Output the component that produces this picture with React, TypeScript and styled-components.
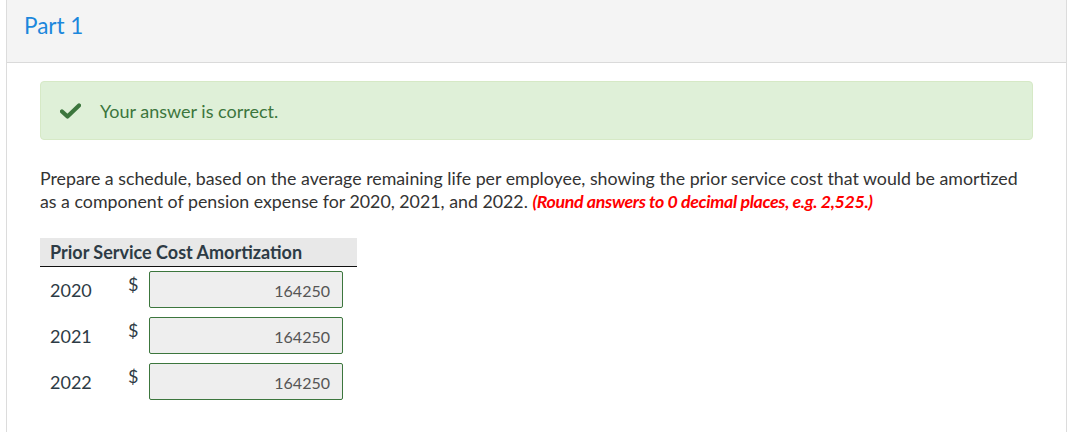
import React from 'react';
import styled, { createGlobalStyle } from 'styled-components';

const GlobalStyle = createGlobalStyle`
  body {
    margin: 0;
    background: #ffffff;
    font-family: Lato, "Open Sans", sans-serif;
  }
`;

const ROWS = [
  { year: '2020', value: '164250' },
  { year: '2021', value: '164250' },
  { year: '2022', value: '164250' },
];

const CheckIcon = () => (
  <svg width="21" height="16" viewBox="0 0 21 16" aria-hidden="true">
    <path
      d="M2 8.5 L7.5 13.5 L19 2.5"
      fill="none"
      stroke="#3c763d"
      strokeWidth="4.2"
      strokeLinecap="round"
      strokeLinejoin="round"
    />
  </svg>
);

const App = () => {
  return (
    <Page>
      <GlobalStyle />
      <Panel>
        <Header>
          <Title>Part 1</Title>
        </Header>
        <Body>
          <Alert>
            <CheckIcon />
            <AlertText>Your answer is correct.</AlertText>
          </Alert>

          <Question>
            Prepare a schedule, based on the average remaining life per employee, showing the prior
            service cost that would be amortized as a component of pension expense for 2020, 2021,
            and 2022. <Hint>(Round answers to 0 decimal places, e.g. 2,525.)</Hint>
          </Question>

          <Table>
            <TableHead>Prior Service Cost Amortization</TableHead>
            {ROWS.map((row) => (
              <Row key={row.year}>
                <Year>{row.year}</Year>
                <Dollar>$</Dollar>
                <Answer>{row.value}</Answer>
              </Row>
            ))}
          </Table>
        </Body>
      </Panel>
    </Page>
  );
};

const Page = styled.div`
  padding: 0 4px 0 6px;
  height: 432px;
  box-sizing: border-box;
`;

const Panel = styled.div`
  height: 100%;
  border-left: 1px solid #dcdcdc;
  border-right: 1px solid #dcdcdc;
  background: #ffffff;
`;

const Header = styled.div`
  height: 63px;
  box-sizing: border-box;
  padding: 11px 17px 0;
  background: #f4f4f4;
  border-bottom: 1px solid #dadada;
`;

const Title = styled.div`
  font-size: 22.5px;
  line-height: 30px;
  color: #1c87dc;
`;

const Body = styled.div`
  padding: 18px 33px 0;
`;

const Alert = styled.div`
  display: flex;
  align-items: center;
  gap: 19px;
  height: 59px;
  box-sizing: border-box;
  padding: 1px 19px 0;
  background: #dff0d8;
  border: 1px solid #d6e9c6;
  border-radius: 4px;
`;

const AlertText = styled.span`
  font-size: 18px;
  color: #3c763d;
`;

const Question = styled.p`
  margin: 27px 0 0;
  font-size: 17.8px;
  line-height: 23px;
  color: #333333;
`;

const Hint = styled.span`
  color: #ff0000;
  font-weight: 700;
  font-style: italic;
  letter-spacing: -0.35px;
`;

const Table = styled.div`
  width: 317px;
  margin-top: 25px;
`;

const TableHead = styled.div`
  height: 29px;
  box-sizing: border-box;
  padding: 2px 10px 0;
  background: #e8e8e8;
  border-bottom: 1px solid #111111;
  font-size: 18px;
  font-weight: 700;
  line-height: 24px;
  color: #2d3b45;
`;

const Row = styled.div`
  display: flex;
  align-items: center;
  height: 37px;
  margin-top: 4px;
  padding-right: 14px;
  & + & {
    margin-top: 9px;
  }
`;

const Year = styled.span`
  width: 78px;
  padding-left: 10px;
  font-size: 18px;
  color: #2d3b45;
`;

const Dollar = styled.span`
  width: 21px;
  align-self: flex-start;
  margin-top: 1px;
  font-size: 18px;
  line-height: 24px;
  color: #2d3b45;
`;

const Answer = styled.div`
  flex: 1;
  height: 37px;
  box-sizing: border-box;
  display: flex;
  align-items: center;
  justify-content: flex-end;
  padding: 2px 12px 0;
  background: #eeeeee;
  border: 1px solid #3c763d;
  border-radius: 2px;
  font-size: 16px;
  color: #555555;
`;

export default App;
